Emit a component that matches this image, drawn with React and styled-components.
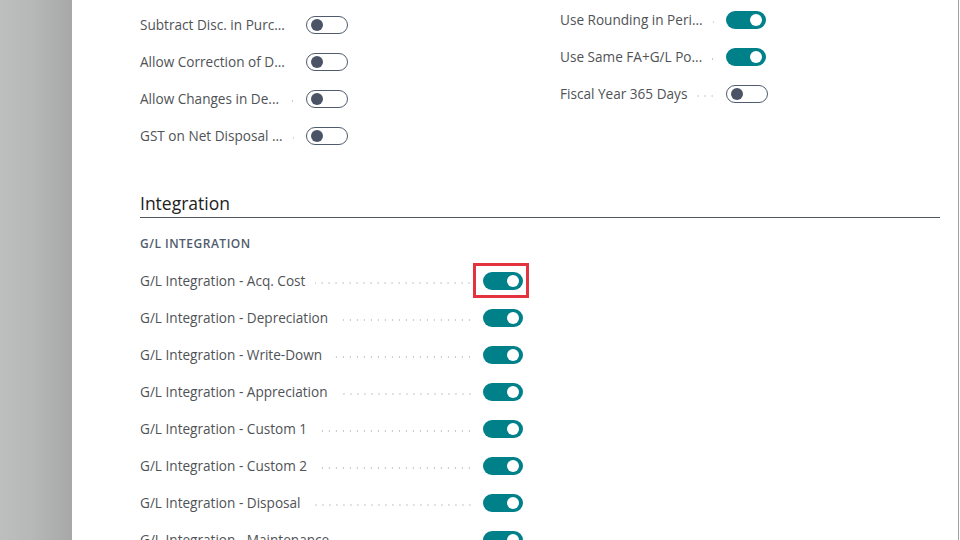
import React from "react";
import styled, { createGlobalStyle } from "styled-components";

const Global = createGlobalStyle`
  html, body { margin: 0; padding: 0; background: #fff; }
  body { font-family: "Open Sans", "Noto Sans", sans-serif; }
  * { box-sizing: border-box; }
`;

const Page = styled.div`
  width: 960px;
  height: 540px;
  display: flex;
  overflow: hidden;
  background: #fff;
`;

const Sidebar = styled.div`
  width: 72px;
  flex: none;
  background: linear-gradient(to right, #bdbfbe 0%, #b6b8b7 45%, #a7a8a7 100%);
`;

const Main = styled.div`
  flex: 1;
  padding: 6px 18px 0 68px;
  border-right: 1px solid #a3a3a3;
  margin-right: 1px;
  background: #fff;
`;

const TopGrid = styled.div`
  display: grid;
  grid-template-columns: 420px 380px;
`;

const Column = styled.div`
  display: flex;
  flex-direction: column;
  margin-top: ${(p) => p.$shift || 0}px;
`;

const Row = styled.div`
  height: 37px;
  display: flex;
  align-items: center;
`;

const LabelCell = styled.div`
  width: ${(p) => p.$w}px;
  display: flex;
  align-items: center;
  flex: none;
`;

const Label = styled.span`
  font-size: 13.6px;
  color: #505356;
  white-space: nowrap;
  flex: none;
`;

const Leader = styled.span`
  flex: 1;
  height: 2px;
  margin: 4px 10px 0 10px;
  background-image: radial-gradient(circle, #c4c6c8 0.7px, transparent 1px);
  background-size: 7px 2px;
  background-repeat: repeat-x;
  background-position: right center;
`;

const Toggle = styled.span`
  position: relative;
  flex: none;
  display: inline-block;
  width: ${(p) => (p.$on ? 40 : 42)}px;
  height: 18px;
  border-radius: 9px;
  background: ${(p) => (p.$on ? "#00818a" : "#fff")};
  border: ${(p) => (p.$on ? "none" : "1px solid #505c6d")};
  &::after {
    content: "";
    position: absolute;
    top: ${(p) => (p.$on ? 3 : 2)}px;
    ${(p) => (p.$on ? "right: 4px;" : "left: 4px;")}
    width: 12px;
    height: 12px;
    border-radius: 50%;
    background: ${(p) => (p.$on ? "#fff" : "#4a5466")};
  }
`;

const Highlight = styled.span`
  position: relative;
  display: inline-flex;
  flex: none;
  &::before {
    content: "";
    position: absolute;
    top: -9px;
    bottom: -8px;
    left: -10px;
    right: -6px;
    border: 3px solid #e5323f;
  }
`;

const SectionTitle = styled.h2`
  margin: 37px 0 0;
  font-size: 17.5px;
  font-weight: 400;
  line-height: 24px;
  color: #212121;
  padding-bottom: 2px;
  border-bottom: 1px solid #4d5761;
  font-family: "Open Sans", "Noto Sans", sans-serif;
`;

const SubTitle = styled.div`
  margin-top: 18px;
  font-size: 12px;
  line-height: 16px;
  font-weight: 600;
  letter-spacing: 0.5px;
  color: #505c6d;
`;

const List = styled.div`
  margin-top: 10px;
  display: flex;
  flex-direction: column;
`;

const leftTop = [
  "Subtract Disc. in Purc...",
  "Allow Correction of D...",
  "Allow Changes in De...",
  "GST on Net Disposal ...",
];
const rightTop = [
  ["Use Rounding in Peri...", true],
  ["Use Same FA+G/L Po...", true],
  ["Fiscal Year 365 Days", false],
];
const integ = [
  "G/L Integration - Acq. Cost",
  "G/L Integration - Depreciation",
  "G/L Integration - Write-Down",
  "G/L Integration - Appreciation",
  "G/L Integration - Custom 1",
  "G/L Integration - Custom 2",
  "G/L Integration - Disposal",
  "G/L Integration - Maintenance",
];

export default function App() {
  return (
    <>
      <Global />
      <Page>
        <Sidebar />
        <Main>
          <TopGrid>
            <Column>
              {leftTop.map((t) => (
                <Row key={t}>
                  <LabelCell $w={166}>
                    <Label>{t}</Label>
                    <Leader />
                  </LabelCell>
                  <Toggle />
                </Row>
              ))}
            </Column>
            <Column $shift={-5}>
              {rightTop.map(([t, on]) => (
                <Row key={t}>
                  <LabelCell $w={166}>
                    <Label>{t}</Label>
                    <Leader />
                  </LabelCell>
                  <Toggle $on={on} />
                </Row>
              ))}
            </Column>
          </TopGrid>
          <SectionTitle>Integration</SectionTitle>
          <SubTitle>G/L INTEGRATION</SubTitle>
          <List>
            {integ.map((t, i) => (
              <Row key={t}>
                <LabelCell $w={343}>
                  <Label>{t}</Label>
                  <Leader />
                </LabelCell>
                {i === 0 ? (
                  <Highlight>
                    <Toggle $on />
                  </Highlight>
                ) : (
                  <Toggle $on />
                )}
              </Row>
            ))}
          </List>
        </Main>
      </Page>
    </>
  );
}
